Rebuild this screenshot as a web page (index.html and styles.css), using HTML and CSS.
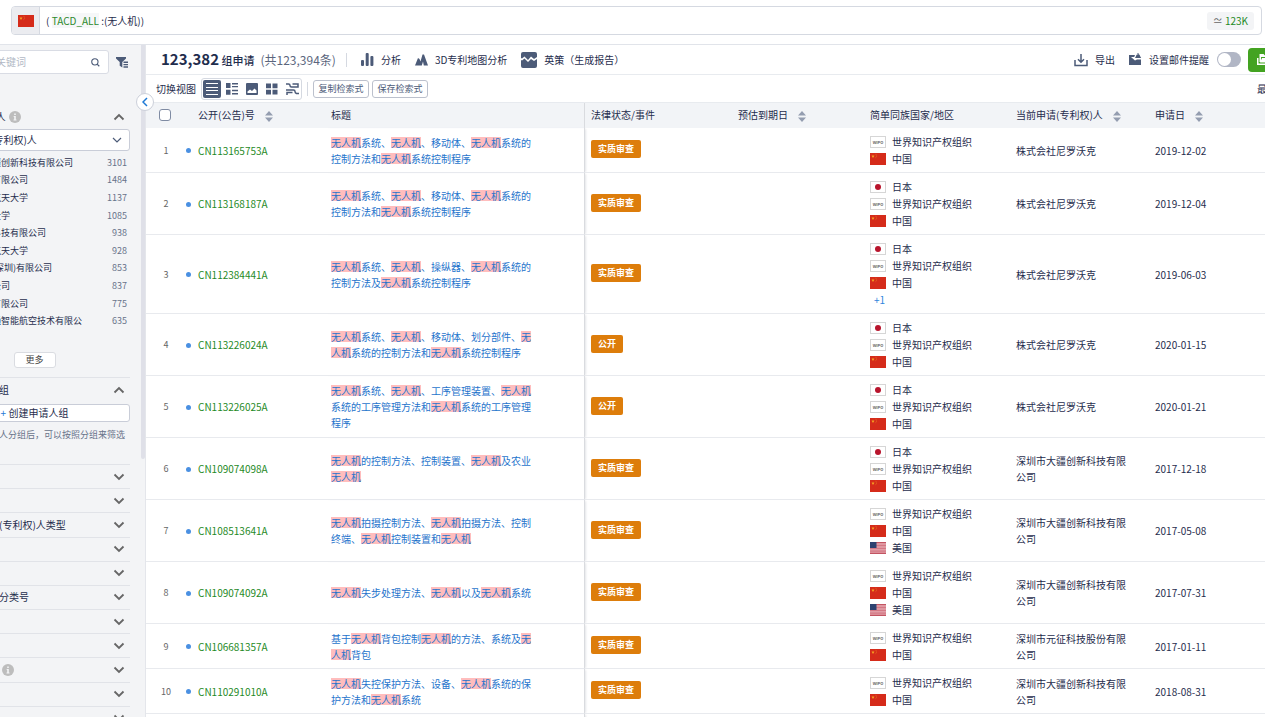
FILE: index.html
```html
<!DOCTYPE html>
<html lang="zh-CN">
<head>
  <meta charset="UTF-8">
  <meta name="viewport" content="width=device-width, initial-scale=1.0">
  <title>专利检索结果</title>
  <link rel="stylesheet" href="styles.css">
</head>
<body>
  <!-- 图标定义 -->
  <svg class="defs" aria-hidden="true">
    <symbol id="cn" viewBox="0 0 16 12"><rect width="16" height="12" fill="#d52b1a"/><path d="M3 1.6l.5 1.2h1.2l-1 .8.4 1.2-1.1-.7-1.1.7.4-1.2-1-.8h1.2z" fill="#f5a623"/><path d="M5.6 1.3l.9.5M6.4 2.7v.8M5.6 4.6l.7-.5" stroke="#f09a20" stroke-width=".6"/></symbol>
    <symbol id="jp" viewBox="0 0 16 12"><rect x=".5" y=".5" width="15" height="11" fill="#fff" stroke="#d6d6d6"/><circle cx="8" cy="6" r="3" fill="#b8142c"/></symbol>
    <symbol id="us" viewBox="0 0 16 12"><rect width="16" height="12" fill="#dc8d97"/><path d="M0 .5h16M0 11.5h16" stroke="#c25462"/><path d="M0 3.5h16M0 6.5h16M0 9h16" stroke="#cf6c79" stroke-width=".6"/><path d="M6 5h10M6 2h10M0 7.8h16" stroke="#e8b4ba" stroke-width=".6"/><rect width="6.5" height="6" fill="#2d4270"/></symbol>
    <symbol id="wipo" viewBox="0 0 16 12"><rect x=".5" y=".5" width="15" height="11" fill="#fff" stroke="#d6d6d6"/><text x="8" y="7.6" text-anchor="middle" font-size="4" font-weight="bold" fill="#666">WIPO</text></symbol>
    <symbol id="sort" viewBox="0 0 8 11"><path d="M4 0l4 4.6H0zM4 11l4-4.6H0z" fill="#949db0"/></symbol>
    <symbol id="up" viewBox="0 0 12 8"><path d="M1.5 6.5L6 2l4.5 4.5" fill="none" stroke="#666" stroke-width="1.8"/></symbol>
    <symbol id="down" viewBox="0 0 12 8"><path d="M1.5 1.5L6 6l4.5-4.5" fill="none" stroke="#666" stroke-width="1.8"/></symbol>
    <symbol id="info" viewBox="0 0 12 12"><circle cx="6" cy="6" r="6" fill="#bdbdbd"/><path d="M5.2 2.5h1.6V4H5.2zM4.7 5h2.1v3.5h.7v1h-3v-1h.7V6h-.5z" fill="#f3f4f6"/></symbol>
  </svg>

  <header class="top">
    <div class="query">
      <button class="query-lang" aria-label="中国"><svg class="flag"><use href="#cn"/></svg></button>
      <div class="query-text" role="textbox" aria-label="检索式">( <span class="field">TACD_ALL</span> :(无人机))</div>
      <span class="count">≃ <b>123K</b></span>
    </div>
  </header>

  <div class="page">
    <aside class="sidebar">
      <div class="filters">
        <div class="side-search">
          <label class="side-input">
            <input type="text" placeholder="请输入过滤关键词" aria-label="过滤关键词">
            <svg width="9" height="9" viewBox="0 0 10 10"><circle cx="4.3" cy="4.3" r="3.5" fill="none" stroke="#4c5b78" stroke-width="1.2"/><path d="M6.8 6.8L9.2 9.2" stroke="#4c5b78" stroke-width="1.3"/></svg>
          </label>
          <button class="icon-btn" aria-label="筛选"><svg width="12" height="12" viewBox="0 0 12 12" fill="#4c5b78"><path d="M0 1h10v1.5L6.3 6v5.5L3.7 9.8V6L0 2.5z"/><path d="M7.5 5.5H12v1.4H7.5zM7.5 7.9H12v1.4H7.5zM7.5 10.3H12v1.4H7.5z"/></svg></button>
        </div>

        <section class="group">
          <h3 class="group-head">申请(专利权)人<svg class="info"><use href="#info"/></svg><svg class="arrow"><use href="#up"/></svg></h3>
          <div class="select">
            <select aria-label="申请人类别"><option>当前申请(专利权)人</option></select>
            <svg class="select-arrow" viewBox="0 0 12 8"><path d="M2 2l4 4 4-4" fill="none" stroke="#4c5b78" stroke-width="1.2"/></svg>
          </div>
          <ul class="names">
            <li><label><input type="checkbox">深圳市大疆创新科技有限公司</label><span>3101</span></li>
            <li><label><input type="checkbox">国家电网有限公司</label><span>1484</span></li>
            <li><label><input type="checkbox">北京航空航天大学</label><span>1137</span></li>
            <li><label><input type="checkbox">西北工业大学</label><span>1085</span></li>
            <li><label><input type="checkbox">广州极飞科技有限公司</label><span>938</span></li>
            <li><label><input type="checkbox">南京航空航天大学</label><span>928</span></li>
            <li><label><input type="checkbox">昊翔电能(深圳)有限公司</label><span>853</span></li>
            <li><label><input type="checkbox">国家电网公司</label><span>837</span></li>
            <li><label><input type="checkbox">丰鸟航空有限公司</label><span>775</span></li>
            <li><label><input type="checkbox">深圳市道通智能航空技术有限公</label><span>635</span></li>
          </ul>
          <button class="more">更多</button>
        </section>

        <section class="group team">
          <h3 class="group-head">自定义申请人组<svg class="arrow"><use href="#up"/></svg></h3>
          <button class="create"><i>+</i> 创建申请人组</button>
          <p class="hint">创建申请人分组后，可以按照分组来筛选</p>
        </section>

        <ul class="folded">
          <li>发明人<svg class="arrow"><use href="#down"/></svg></li>
          <li>代理机构<svg class="arrow"><use href="#down"/></svg></li>
          <li>第一当前申请(专利权)人类型<svg class="arrow"><use href="#down"/></svg></li>
          <li>申请年<svg class="arrow"><use href="#down"/></svg></li>
          <li>公开年<svg class="arrow"><use href="#down"/></svg></li>
          <li>国民经济行业分类号<svg class="arrow"><use href="#down"/></svg></li>
          <li>受理局<svg class="arrow"><use href="#down"/></svg></li>
          <li>法律状态<svg class="arrow"><use href="#down"/></svg></li>
          <li>技术主题分类<svg class="info"><use href="#info"/></svg><svg class="arrow"><use href="#down"/></svg></li>
          <li>专利类型<svg class="arrow"><use href="#down"/></svg></li>
          <li>专利价值<svg class="arrow"><use href="#down"/></svg></li>
        </ul>
      </div>
      <div class="scroll"></div>
      <button class="collapse" aria-label="收起"><svg width="6" height="10" viewBox="0 0 6 10"><path d="M5 1L1 5l4 4" fill="none" stroke="#1f7ad6" stroke-width="1.5"/></svg></button>
    </aside>

    <main class="main">
      <div class="bar summary">
        <h1><b>123,382</b> 组申请</h1>
        <span class="total">(共123,394条)</span>
        <span class="line"></span>
        <button class="tool">
          <svg width="13" height="13" viewBox="0 0 13 13" fill="#4c5b78"><rect x="0" y="7" width="3" height="6" rx="1"/><rect x="4.700" y="0" width="3" height="13" rx="1"/><rect x="9.400" y="3" width="3" height="10" rx="1"/></svg>分析</button>
        <button class="tool">
          <svg width="13" height="12" viewBox="0 0 13 12" fill="#4c5b78"><path d="M0 11.500L3 4l1.500 1 1 2.500 2-7h1.500l4 11H8.800L8 7.500l-1.200 4z"/></svg>3D专利地图分析</button>
        <button class="tool">
          <svg width="16" height="16" viewBox="0 0 16 16" fill="#4c5b78"><path d="M0 2q0-2 2-2h12q2 0 2 2v3l-3 2-3-2.5L7 8 3.500 4.500 1 6.500 0 6z"/><path d="M0 8l1 .5 2.500-2L7 10l3-3 3 2 3-2v7q0 2-2 2H2q-2 0-2-2z"/></svg>英策（生成报告）</button>
        <div class="bar-right">
          <button class="tool">
            <svg width="14" height="14" viewBox="0 0 14 14" fill="none" stroke="#4c5b78" stroke-width="1.5"><path d="M1 7v5.500h12V7M7 1v8M4 6.200l3 3 3-3"/></svg>导出</button>
          <button class="tool">
            <svg width="13" height="13" viewBox="0 0 13 13" fill="#4c5b78"><path d="M0 2h6L5.200 4H2l4 3.500L8 6.500h4V12H0z"/><path d="M9 1q2 0 2.300 2.500l.9 1.500H6l.8-1.500Q7.200 1 9 1zM8.500 0h1v2h-1z"/></svg>设置邮件提醒</button>
          <input class="switch" type="checkbox" role="switch" aria-label="设置邮件提醒">
          <button class="save"><svg width="16" height="11" viewBox="0 0 16 11" fill="#fff"><path d="M0 4h1.500v5.500H12V11H0z"/><path d="M2.500 0h4L8 1.500h6V3H4v5H2.500zM5 4h10v4.500H3z"/></svg>保存</button>
        </div>
      </div>

      <div class="bar views">
        <span>切换视图</span>
        <div class="switcher">
          <button class="active" aria-label="列表"><svg width="14" height="14" viewBox="0 0 14 14"><path d="M1 1.500h12M1 5.500h12M1 8.500h12M1 12.500h12" stroke="#fff"/></svg></button>
          <button aria-label="图文"><svg width="12" height="12" viewBox="0 0 12 12" fill="#4c5b78"><path d="M0 0h4.500v5H0zM0 6.800h4.500v5H0zM6 0h6v1.500H6zM6 2.900h6v1.400H6zM6 6.800h6v1.500H6zM6 9.900h6v1.500H6z"/></svg></button>
          <button aria-label="图片"><svg width="12" height="12" viewBox="0 0 12 12"><rect width="12" height="12" rx="1" fill="#4c5b78"/><path d="M1.500 10V8.500L4 6.500l2 1.500L8.500 5.500l2 2V10z" fill="#fff"/></svg></button>
          <button aria-label="宫格"><svg width="12" height="12" viewBox="0 0 12 12" fill="#4c5b78"><path d="M0 .5h5v4.700H0zM6.500.5h5v4.700h-5zM0 6.800h5v4.700H0zM6.500 6.800h5v4.700h-5z"/></svg></button>
          <button aria-label="双栏"><svg width="13" height="12" viewBox="0 0 13 12" fill="none" stroke="#4c5b78" stroke-width="1.500"><path d="M0 1h2.500q1.500 0 1.500 1.500T5.500 4H12V1H6.500M0 7h7.500Q9 7 9 8.500t1.500 2H13M1 12V9.500h5.500"/></svg></button>
        </div>
        <span class="line"></span>
        <div class="small-btns">
          <button>复制检索式</button>
          <button>保存检索式</button>
        </div>
        <span class="order">最相关</span>
      </div>

      <table class="results">
        <colgroup>
          <col class="c-num"><col class="c-pub"><col class="c-title"><col class="c-legal"><col class="c-expiry"><col class="c-country"><col class="c-owner"><col>
        </colgroup>
        <thead>
          <tr>
            <th><input type="checkbox" aria-label="全选"></th>
            <th class="pub">公开(公告)号<svg class="sort"><use href="#sort"/></svg></th>
            <th class="title">标题</th>
            <th>法律状态/事件</th>
            <th>预估到期日<svg class="sort"><use href="#sort"/></svg></th>
            <th>简单同族国家/地区</th>
            <th>当前申请(专利权)人<svg class="sort"><use href="#sort"/></svg></th>
            <th>申请日<svg class="sort"><use href="#sort"/></svg></th>
          </tr>
        </thead>
        <tbody>
          <tr>
            <td class="num">1</td>
            <td class="pub"><a href="#">CN113165753A</a></td>
            <td class="title"><a href="#"><mark>无人机</mark>系统、<mark>无人机</mark>、移动体、<mark>无人机</mark>系统的控制方法和<mark>无人机</mark>系统控制程序</a></td>
            <td class="status"><span class="badge">实质审查</span></td>
            <td></td>
            <td><ul class="family"><li><svg class="flag"><use href="#wipo"/></svg>世界知识产权组织</li><li><svg class="flag"><use href="#cn"/></svg>中国</li></ul></td>
            <td class="owner">株式会社尼罗沃克</td>
            <td>2019-12-02</td>
          </tr>
          <tr>
            <td class="num">2</td>
            <td class="pub"><a href="#">CN113168187A</a></td>
            <td class="title"><a href="#"><mark>无人机</mark>系统、<mark>无人机</mark>、移动体、<mark>无人机</mark>系统的控制方法和<mark>无人机</mark>系统控制程序</a></td>
            <td class="status"><span class="badge">实质审查</span></td>
            <td></td>
            <td><ul class="family"><li><svg class="flag"><use href="#jp"/></svg>日本</li><li><svg class="flag"><use href="#wipo"/></svg>世界知识产权组织</li><li><svg class="flag"><use href="#cn"/></svg>中国</li></ul></td>
            <td class="owner">株式会社尼罗沃克</td>
            <td>2019-12-04</td>
          </tr>
          <tr>
            <td class="num">3</td>
            <td class="pub"><a href="#">CN112384441A</a></td>
            <td class="title"><a href="#"><mark>无人机</mark>系统、<mark>无人机</mark>、操纵器、<mark>无人机</mark>系统的控制方法及<mark>无人机</mark>系统控制程序</a></td>
            <td class="status"><span class="badge">实质审查</span></td>
            <td></td>
            <td><ul class="family"><li><svg class="flag"><use href="#jp"/></svg>日本</li><li><svg class="flag"><use href="#wipo"/></svg>世界知识产权组织</li><li><svg class="flag"><use href="#cn"/></svg>中国</li><li><a class="rest" href="#">+1</a></li></ul></td>
            <td class="owner">株式会社尼罗沃克</td>
            <td>2019-06-03</td>
          </tr>
          <tr>
            <td class="num">4</td>
            <td class="pub"><a href="#">CN113226024A</a></td>
            <td class="title"><a href="#"><mark>无人机</mark>系统、<mark>无人机</mark>、移动体、划分部件、<mark>无人机</mark>系统的控制方法和<mark>无人机</mark>系统控制程序</a></td>
            <td class="status"><span class="badge">公开</span></td>
            <td></td>
            <td><ul class="family"><li><svg class="flag"><use href="#jp"/></svg>日本</li><li><svg class="flag"><use href="#wipo"/></svg>世界知识产权组织</li><li><svg class="flag"><use href="#cn"/></svg>中国</li></ul></td>
            <td class="owner">株式会社尼罗沃克</td>
            <td>2020-01-15</td>
          </tr>
          <tr>
            <td class="num">5</td>
            <td class="pub"><a href="#">CN113226025A</a></td>
            <td class="title"><a href="#"><mark>无人机</mark>系统、<mark>无人机</mark>、工序管理装置、<mark>无人机</mark>系统的工序管理方法和<mark>无人机</mark>系统的工序管理程序</a></td>
            <td class="status"><span class="badge">公开</span></td>
            <td></td>
            <td><ul class="family"><li><svg class="flag"><use href="#jp"/></svg>日本</li><li><svg class="flag"><use href="#wipo"/></svg>世界知识产权组织</li><li><svg class="flag"><use href="#cn"/></svg>中国</li></ul></td>
            <td class="owner">株式会社尼罗沃克</td>
            <td>2020-01-21</td>
          </tr>
          <tr>
            <td class="num">6</td>
            <td class="pub"><a href="#">CN109074098A</a></td>
            <td class="title"><a href="#"><mark>无人机</mark>的控制方法、控制装置、<mark>无人机</mark>及农业<mark>无人机</mark></a></td>
            <td class="status"><span class="badge">实质审查</span></td>
            <td></td>
            <td><ul class="family"><li><svg class="flag"><use href="#jp"/></svg>日本</li><li><svg class="flag"><use href="#wipo"/></svg>世界知识产权组织</li><li><svg class="flag"><use href="#cn"/></svg>中国</li></ul></td>
            <td class="owner">深圳市大疆创新科技有限公司</td>
            <td>2017-12-18</td>
          </tr>
          <tr>
            <td class="num">7</td>
            <td class="pub"><a href="#">CN108513641A</a></td>
            <td class="title"><a href="#"><mark>无人机</mark>拍摄控制方法、<mark>无人机</mark>拍摄方法、控制终端、<mark>无人机</mark>控制装置和<mark>无人机</mark></a></td>
            <td class="status"><span class="badge">实质审查</span></td>
            <td></td>
            <td><ul class="family"><li><svg class="flag"><use href="#wipo"/></svg>世界知识产权组织</li><li><svg class="flag"><use href="#cn"/></svg>中国</li><li><svg class="flag"><use href="#us"/></svg>美国</li></ul></td>
            <td class="owner">深圳市大疆创新科技有限公司</td>
            <td>2017-05-08</td>
          </tr>
          <tr>
            <td class="num">8</td>
            <td class="pub"><a href="#">CN109074092A</a></td>
            <td class="title"><a href="#"><mark>无人机</mark>失步处理方法、<mark>无人机</mark>以及<mark>无人机</mark>系统</a></td>
            <td class="status"><span class="badge">实质审查</span></td>
            <td></td>
            <td><ul class="family"><li><svg class="flag"><use href="#wipo"/></svg>世界知识产权组织</li><li><svg class="flag"><use href="#cn"/></svg>中国</li><li><svg class="flag"><use href="#us"/></svg>美国</li></ul></td>
            <td class="owner">深圳市大疆创新科技有限公司</td>
            <td>2017-07-31</td>
          </tr>
          <tr>
            <td class="num">9</td>
            <td class="pub"><a href="#">CN106681357A</a></td>
            <td class="title"><a href="#">基于<mark>无人机</mark>背包控制<mark>无人机</mark>的方法、系统及<mark>无人机</mark>背包</a></td>
            <td class="status"><span class="badge">实质审查</span></td>
            <td></td>
            <td><ul class="family"><li><svg class="flag"><use href="#wipo"/></svg>世界知识产权组织</li><li><svg class="flag"><use href="#cn"/></svg>中国</li></ul></td>
            <td class="owner">深圳市元征科技股份有限公司</td>
            <td>2017-01-11</td>
          </tr>
          <tr>
            <td class="num">10</td>
            <td class="pub"><a href="#">CN110291010A</a></td>
            <td class="title"><a href="#"><mark>无人机</mark>失控保护方法、设备、<mark>无人机</mark>系统的保护方法和<mark>无人机</mark>系统</a></td>
            <td class="status"><span class="badge">实质审查</span></td>
            <td></td>
            <td><ul class="family"><li><svg class="flag"><use href="#wipo"/></svg>世界知识产权组织</li><li><svg class="flag"><use href="#cn"/></svg>中国</li></ul></td>
            <td class="owner">深圳市大疆创新科技有限公司</td>
            <td>2018-08-31</td>
          </tr>
          <tr class="filler"><td></td><td></td><td class="title"></td><td></td><td></td><td></td><td></td><td></td></tr>
        </tbody>
      </table>
    </main>
  </div>
</body>
</html>
```

FILE: styles.css
```css
* {
  box-sizing: border-box;
}

body {
  margin: 0;
  height: 100vh;
  overflow: hidden;
  display: flex;
  flex-direction: column;
  font-family: "Noto Sans CJK SC", "Noto Sans", sans-serif;
  font-size: 10px;
  line-height: 16px;
  color: #1f2d4d;
  background: #fff;
}

button,
input,
select {
  font: inherit;
  color: inherit;
  margin: 0;
}

button {
  padding: 0;
  border: 0;
  background: none;
  white-space: nowrap;
  cursor: pointer;
}

ul {
  list-style: none;
  margin: 0;
  padding: 0;
}

a {
  text-decoration: none;
}

svg {
  flex: none;
}

.defs {
  position: absolute;
  width: 0;
  height: 0;
}

.flag {
  width: 16px;
  height: 12px;
}

.info {
  width: 12px;
  height: 12px;
}

/* 顶部检索框 */
.top {
  flex: none;
  height: 45px;
  padding: 6px 3px 0 11px;
  border-bottom: 1px solid #e1e4ea;
}

.query {
  display: flex;
  align-items: center;
  height: 29px;
  border: 1px solid #d5d9e1;
  border-radius: 4px;
  padding-right: 7px;
  overflow: hidden;
}

.query-lang {
  display: flex;
  align-items: center;
  justify-content: center;
  align-self: stretch;
  width: 28px;
  background: #ebecf0;
  border-right: 1px solid #d5d9e1;
}

.query-text {
  flex: 1;
  padding-left: 6px;
}

.field {
  color: #2c8a2c;
  background: #f6f7f8;
}

.count {
  color: #666;
  background: #f3f4f6;
  border-radius: 3px;
  padding: 1px 6px;
}

.count b {
  font-weight: 400;
  color: #1f8a1f;
}

.page {
  flex: 1;
  min-height: 0;
  display: flex;
}

/* 左侧筛选 */
.sidebar {
  position: relative;
  flex: none;
  display: flex;
  margin-left: -61px;
  background: #f3f4f6;
  border-right: 1px solid #e4e6eb;
}

.filters {
  width: 191px;
  margin-right: 11px;
  padding-top: 5px;
}

.scroll {
  width: 4px;
  height: 414px;
  background: #dfe0e8;
  border-radius: 0 0 2px 2px;
}

.collapse {
  position: absolute;
  right: -9px;
  top: 48px;
  z-index: 2;
  display: flex;
  align-items: center;
  justify-content: center;
  width: 18px;
  height: 18px;
  border: 1px solid #ccd0da;
  border-radius: 50%;
  background: #fff;
}

.side-search {
  display: flex;
  align-items: center;
  gap: 7px;
}

.side-input {
  display: flex;
  align-items: center;
  width: 170px;
  height: 24px;
  padding: 0 8px 0 6px;
  border: 1px solid #d9dce4;
  border-radius: 3px;
  background: #fff;
}

.side-input input {
  flex: 1;
  min-width: 0;
  padding: 0;
  border: 0;
  outline: none;
  background: none;
}

.side-input input::placeholder {
  color: #b3b9c5;
}

.icon-btn {
  display: flex;
}

.group-head {
  display: flex;
  align-items: center;
  gap: 3px;
  height: 24px;
  margin: 0;
  font-size: 10px;
  font-weight: 400;
}

.arrow {
  width: 12px;
  height: 8px;
  margin-left: auto;
  margin-right: 5px;
}

.group {
  padding-top: 31px;
  border-bottom: 1px solid #e1e3e8;
}

.select {
  display: flex;
  align-items: center;
  height: 22px;
  border: 1px solid #c9cdd8;
  border-radius: 3px;
  background: #fff;
}

.select select {
  flex: 1;
  appearance: none;
  border: 0;
  padding: 0 0 0 10px;
  outline: none;
  background: none;
}

.select-arrow {
  width: 12px;
  height: 8px;
  margin-right: 6px;
}

.names {
  display: grid;
  grid-template-rows: repeat(10, 1fr);
  height: 176px;
  margin-top: 3px;
  padding-right: 3px;
  font-size: 9px;
}

.names li {
  display: flex;
  align-items: center;
  justify-content: space-between;
}

.names label {
  display: flex;
  align-items: center;
  gap: 6px;
}

.names input {
  width: 11px;
  height: 11px;
}

.names span {
  color: #68738a;
}

.more {
  display: block;
  width: 42px;
  height: 16px;
  margin: 22px auto 9px;
  border: 1px solid #dadce1;
  border-radius: 3px;
  background: #fff;
  font-size: 9px;
  line-height: 14px;
  color: #444;
}

.team {
  padding-top: 0;
}

.create {
  display: block;
  width: 100%;
  height: 18px;
  margin-top: 2px;
  border: 1px solid #c9cdd8;
  border-radius: 3px;
  background: #fff;
}

.create i {
  font-style: normal;
  color: #1f7ad6;
}

.hint {
  margin: 5px 5px 21px 0;
  font-size: 9px;
  text-align: right;
  color: #68738a;
}

.folded {
  display: grid;
  grid-template-rows: repeat(11, 1fr);
  height: 266px;
}

.folded li {
  display: flex;
  align-items: center;
  gap: 3px;
  border-bottom: 1px solid #e1e3e8;
}

/* 工具栏 */
.main {
  flex: 1;
  min-width: 0;
  overflow: hidden;
}

.bar {
  display: flex;
  align-items: center;
}

.summary {
  height: 30px;
  padding-left: 15px;
  border-bottom: 1px solid #e8ebef;
}

.summary h1 {
  margin: 0 6px 0 0;
  font-size: 11px;
  font-weight: 500;
}

.summary h1 b {
  font-size: 15px;
}

.total {
  margin-right: 10px;
  font-size: 12px;
  color: #5b667d;
}

.line {
  width: 1px;
  height: 14px;
  background: #d5d9e1;
}

.tool {
  display: flex;
  align-items: center;
  gap: 7px;
  margin-left: 14px;
}

.bar-right {
  display: flex;
  align-items: center;
  margin-left: auto;
  margin-right: -43px;
}

.switch {
  appearance: none;
  display: flex;
  width: 24px;
  height: 15px;
  margin: 0 7px 0 8px;
  padding: 1px;
  border-radius: 8px;
  background: #b1b6c5;
}

.switch::before {
  content: "";
  width: 13px;
  height: 13px;
  border-radius: 50%;
  background: #fff;
}

.save {
  display: flex;
  align-items: center;
  gap: 6px;
  width: 60px;
  height: 24px;
  padding-left: 9px;
  border-radius: 4px;
  background: #43a321;
  color: #fff;
}

.views {
  height: 28px;
  padding-left: 10px;
  gap: 5px;
  border-bottom: 1px solid #e8ebef;
}

.switcher {
  display: flex;
  gap: 2px;
  height: 22px;
  padding: 1px 0 1px 1px;
  border: 1px solid #d5d9e1;
  border-radius: 3px;
}

.switcher button {
  display: flex;
  align-items: center;
  justify-content: center;
  width: 18px;
  border-radius: 2px;
}

.switcher .active {
  background: #4c5b78;
}

.small-btns {
  display: flex;
  gap: 3px;
}

.small-btns button {
  width: 56px;
  height: 18px;
  border: 1px solid #bcc1cd;
  border-radius: 3px;
  background: #fff;
  font-size: 9px;
  color: #4c5b78;
}

.order {
  margin-left: auto;
  margin-right: -22px;
}

/* 结果表格 */
.results {
  width: 100%;
  table-layout: fixed;
  border-collapse: separate;
  border-spacing: 0;
}

.c-num { width: 40px; }
.c-pub { width: 139px; }
.c-title { width: 260px; }
.c-legal { width: 147px; }
.c-expiry { width: 132px; }
.c-country { width: 146px; }
.c-owner { width: 139px; }

th {
  height: 25px;
  padding: 0 0 1px 6px;
  background: #f2f4f7;
  font-weight: 400;
  text-align: left;
}

th input {
  appearance: none;
  display: block;
  width: 12px;
  height: 12px;
  margin-left: 7px;
  border: 1px solid #7f8ba3;
  border-radius: 3px;
  background: #fff;
}

td {
  padding: 6px 0 5px 6px;
  border-bottom: 1px solid #e8eaee;
}

th.pub {
  padding-left: 12px;
}

th.title,
td.title {
  padding-right: 48px;
  border-right: 1px solid #d9dbdf;
  box-shadow: 2px 0 2px -1px #e4e5e8;
}

.sort {
  width: 8px;
  height: 11px;
  margin-left: 10px;
  vertical-align: middle;
}

.num {
  padding-left: 0;
  text-align: center;
  font-size: 9px;
  color: #666;
}

.pub {
  padding-left: 0;
}

.pub a {
  display: flex;
  align-items: center;
  gap: 7px;
  color: #1f8a1f;
}

td.pub a::before {
  content: "";
  width: 5px;
  height: 5px;
  border-radius: 50%;
  background: #4a90e2;
}

.title a {
  color: #1f74cc;
}

mark {
  color: inherit;
  background: linear-gradient(#ffbdbd, #ffbdbd) center / 100% 11px no-repeat;
  -webkit-box-decoration-break: clone;
  box-decoration-break: clone;
}

.status {
  padding-bottom: 8px;
}

.badge {
  display: inline-block;
  padding: 1px 7px;
  border-radius: 2px;
  background: #dd7d0b;
  color: #fff;
  font-size: 9px;
  font-weight: 700;
}

.family {
  display: grid;
  gap: 1px;
}

.family li {
  display: flex;
  align-items: center;
  gap: 6px;
  height: 16px;
}

.rest {
  padding-left: 4px;
  color: #2f86dd;
}

.owner {
  padding-right: 16px;
}

.filler td {
  height: 45px;
}
```
